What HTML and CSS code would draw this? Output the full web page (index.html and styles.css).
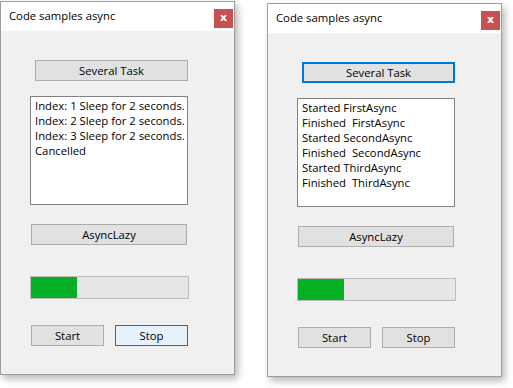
FILE: index.html
```html
<!DOCTYPE html>
<html>
<head>
<meta charset="utf-8">
<link rel="stylesheet" href="styles.css">
</head>
<body>
<div class="desk">
  <div class="win w1">
    <div class="titlebar"><span class="title">Code samples async</span><span class="close">x</span></div>
    <div class="client">
      <button class="btn several">Several Task</button>
      <div class="list">
        <div class="ln">Index: 1 Sleep for 2 seconds.</div>
        <div class="ln">Index: 2 Sleep for 2 seconds.</div>
        <div class="ln">Index: 3 Sleep for 2 seconds.</div>
        <div class="ln">Cancelled</div>
      </div>
      <button class="btn lazy">AsyncLazy</button>
      <div class="progress"><div class="fill" style="width:46px"></div></div>
      <div class="row">
        <button class="btn small">Start</button>
        <button class="btn small hot">Stop</button>
      </div>
    </div>
  </div>
  <div class="win w2">
    <div class="titlebar"><span class="title">Code samples async</span><span class="close">x</span></div>
    <div class="client">
      <button class="btn several focus">Several Task</button>
      <div class="list">
        <div class="ln">Started FirstAsync</div>
        <div class="ln">Finished  FirstAsync</div>
        <div class="ln">Started SecondAsync</div>
        <div class="ln">Finished  SecondAsync</div>
        <div class="ln">Started ThirdAsync</div>
        <div class="ln">Finished  ThirdAsync</div>
      </div>
      <button class="btn lazy">AsyncLazy</button>
      <div class="progress"><div class="fill" style="width:46px"></div></div>
      <div class="row">
        <button class="btn small">Start</button>
        <button class="btn small">Stop</button>
      </div>
    </div>
  </div>
</div>
</body>
</html>
```
FILE: styles.css
```css
html, body {
  margin: 0;
  padding: 0;
  background: #ffffff;
}
body {
  font-family: "Open Sans", "Noto Sans", sans-serif;
  font-size: 11.3px;
  color: #000;
}
.desk {
  position: relative;
  width: 513px;
  height: 388px;
  overflow: hidden;
}
.win {
  position: absolute;
  box-sizing: border-box;
  width: 235px;
  height: 374px;
  border: 1px solid #9d9d9d;
  background: #f0f0f0;
  box-shadow: 3px 4px 7px rgba(0, 0, 0, 0.28);
  display: flex;
  flex-direction: column;
}
.w1 { left: 0; top: 1px; }
.w2 { left: 267px; top: 3px; }
.titlebar {
  height: 29px;
  background: #ffffff;
  display: flex;
  justify-content: space-between;
  align-items: flex-start;
  flex: none;
}
.title {
  padding: 6px 0 0 8px;
  line-height: 15px;
  font-size: 11.3px;
}
.close {
  margin: 7px 1px 0 0;
  width: 19px;
  height: 19px;
  background: #c75050;
  color: #fff;
  font-weight: bold;
  font-size: 11px;
  line-height: 17px;
  text-align: center;
  font-family: "DejaVu Sans", sans-serif;
}
.client {
  display: flex;
  flex-direction: column;
  align-items: flex-start;
  padding-top: 29px;
}
.btn {
  box-sizing: border-box;
  margin: 0;
  padding: 0;
  border: 1px solid #adadad;
  background: #e1e1e1;
  font-family: "Open Sans", "Noto Sans", sans-serif;
  font-size: 11.3px;
  color: #000;
  height: 21px;
  line-height: 17px;
}
.several {
  width: 153px;
  margin-left: 34px;
}
.several.focus {
  border: 2px solid #0078d7;
}
.list {
  box-sizing: border-box;
  width: 158px;
  height: 109px;
  margin: 15px 0 0 29px;
  border: 1px solid #828282;
  background: #fff;
  padding: 1px 0 0 4px;
}
.ln {
  white-space: pre;
  line-height: 15px;
}
.lazy {
  width: 156px;
  margin: 19px 0 0 30px;
}
.progress {
  box-sizing: border-box;
  width: 159px;
  height: 23px;
  margin: 31px 0 0 29px;
  border: 1px solid #bcbcbc;
  background: #e6e6e6;
}
.fill {
  height: 100%;
  background: #06b025;
}
.row {
  display: flex;
  gap: 11px;
  margin: 26px 0 0 30px;
}
.small {
  width: 73px;
}
.small.hot {
  border-color: #0078d7;
  background: #e5f1fb;
}
```
